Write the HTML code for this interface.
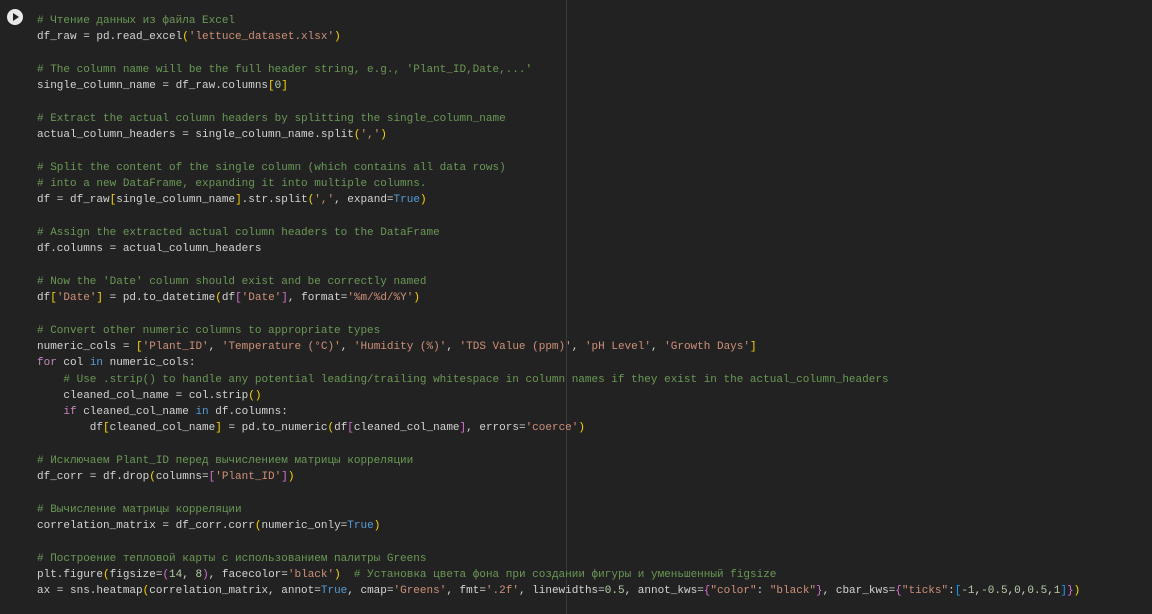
<!DOCTYPE html>
<html><head><meta charset="utf-8"><style>
html,body{margin:0;padding:0;background:#222222;width:1152px;height:614px;overflow:hidden}
pre{position:absolute;left:37px;top:13px;margin:0;font-family:"Liberation Mono","DejaVu Sans Mono",monospace;font-size:11px;line-height:16.3px;color:#d4d4d4;letter-spacing:0px}
.c{color:#6a9955}.s{color:#ce9178}.k{color:#c586c0}.b{color:#569cd6}.n{color:#b5cea8}.y{color:#ffd700}.p{color:#da70d6}.l{color:#179fff}
.vl{position:absolute;left:566px;top:0;width:1px;height:614px;background:#3a3a3a}
.run{position:absolute;left:7px;top:9px;width:16px;height:16px;border-radius:50%;background:#e8e8e8}
.run:after{content:"";position:absolute;left:6px;top:4px;border-left:6px solid #222;border-top:4px solid transparent;border-bottom:4px solid transparent}
</style></head><body>
<div class="vl"></div><div class="run"></div>
<pre><span class="c"># Чтение данных из файла Excel</span>
df_raw = pd.read_excel<span class="y">(</span><span class="s">'lettuce_dataset.xlsx'</span><span class="y">)</span>

<span class="c"># The column name will be the full header string, e.g., 'Plant_ID,Date,...'</span>
single_column_name = df_raw.columns<span class="y">[</span><span class="n">0</span><span class="y">]</span>

<span class="c"># Extract the actual column headers by splitting the single_column_name</span>
actual_column_headers = single_column_name.split<span class="y">(</span><span class="s">','</span><span class="y">)</span>

<span class="c"># Split the content of the single column (which contains all data rows)</span>
<span class="c"># into a new DataFrame, expanding it into multiple columns.</span>
df = df_raw<span class="y">[</span>single_column_name<span class="y">]</span>.str.split<span class="y">(</span><span class="s">','</span>, expand=<span class="b">True</span><span class="y">)</span>

<span class="c"># Assign the extracted actual column headers to the DataFrame</span>
df.columns = actual_column_headers

<span class="c"># Now the 'Date' column should exist and be correctly named</span>
df<span class="y">[</span><span class="s">'Date'</span><span class="y">]</span> = pd.to_datetime<span class="y">(</span>df<span class="p">[</span><span class="s">'Date'</span><span class="p">]</span>, format=<span class="s">'%m/%d/%Y'</span><span class="y">)</span>

<span class="c"># Convert other numeric columns to appropriate types</span>
numeric_cols = <span class="y">[</span><span class="s">'Plant_ID'</span>, <span class="s">'Temperature (°C)'</span>, <span class="s">'Humidity (%)'</span>, <span class="s">'TDS Value (ppm)'</span>, <span class="s">'pH Level'</span>, <span class="s">'Growth Days'</span><span class="y">]</span>
<span class="k">for</span> col <span class="b">in</span> numeric_cols:
    <span class="c"># Use .strip() to handle any potential leading/trailing whitespace in column names if they exist in the actual_column_headers</span>
    cleaned_col_name = col.strip<span class="y">()</span>
    <span class="k">if</span> cleaned_col_name <span class="b">in</span> df.columns:
        df<span class="y">[</span>cleaned_col_name<span class="y">]</span> = pd.to_numeric<span class="y">(</span>df<span class="p">[</span>cleaned_col_name<span class="p">]</span>, errors=<span class="s">'coerce'</span><span class="y">)</span>

<span class="c"># Исключаем Plant_ID перед вычислением матрицы корреляции</span>
df_corr = df.drop<span class="y">(</span>columns=<span class="p">[</span><span class="s">'Plant_ID'</span><span class="p">]</span><span class="y">)</span>

<span class="c"># Вычисление матрицы корреляции</span>
correlation_matrix = df_corr.corr<span class="y">(</span>numeric_only=<span class="b">True</span><span class="y">)</span>

<span class="c"># Построение тепловой карты с использованием палитры Greens</span>
plt.figure<span class="y">(</span>figsize=<span class="p">(</span><span class="n">14</span>, <span class="n">8</span><span class="p">)</span>, facecolor=<span class="s">'black'</span><span class="y">)</span>  <span class="c"># Установка цвета фона при создании фигуры и уменьшенный figsize</span>
ax = sns.heatmap<span class="y">(</span>correlation_matrix, annot=<span class="b">True</span>, cmap=<span class="s">'Greens'</span>, fmt=<span class="s">'.2f'</span>, linewidths=<span class="n">0.5</span>, annot_kws=<span class="p">{</span><span class="s">"color"</span>: <span class="s">"black"</span><span class="p">}</span>, cbar_kws=<span class="p">{</span><span class="s">"ticks"</span>:<span class="l">[</span><span class="n">-1</span>,<span class="n">-0.5</span>,<span class="n">0</span>,<span class="n">0.5</span>,<span class="n">1</span><span class="l">]</span><span class="p">}</span><span class="y">)</span></pre>
</body></html>
